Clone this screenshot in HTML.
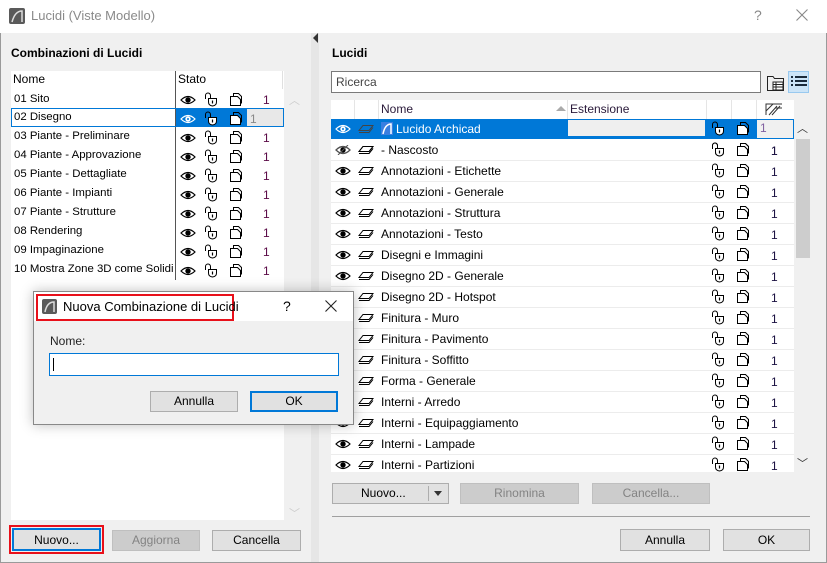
<!DOCTYPE html>
<html><head><meta charset="utf-8"><style>
*{box-sizing:border-box;margin:0;padding:0}
body{width:827px;height:563px;overflow:hidden;font-family:"Liberation Sans",sans-serif;font-size:12px;color:#000;background:#f0f0f0;position:relative}
.a{position:absolute}
.btn{position:absolute;background:#e1e1e1;border:1px solid #adadad;text-align:center;font-size:12px}
.dis{background:#cccccc;border-color:#bfbfbf;color:#838383}
.row{position:absolute;height:19px;line-height:19px;white-space:nowrap}
.lr{font-size:11.4px}
svg.i{position:absolute}
</style></head><body>
<svg width="0" height="0" style="position:absolute">
<defs>
<symbol id="eye" viewBox="0 0 16 10"><path d="M1 5 Q8 -2 15 5 Q8 12 1 5Z" fill="none" stroke="#000" stroke-width="1.2"/><circle cx="8" cy="5" r="2.7" fill="#000"/></symbol>
<symbol id="eyew" viewBox="0 0 16 10"><path d="M1 5 Q8 -2 15 5 Q8 12 1 5Z" fill="none" stroke="#fff" stroke-width="1.2"/><circle cx="8" cy="5" r="2.7" fill="#fff"/><circle cx="8" cy="5" r="1" fill="#0078d7"/></symbol>
<symbol id="eyeh" viewBox="0 0 16 10"><path d="M1 5 Q8 -2 15 5 Q8 12 1 5Z" fill="none" stroke="#555" stroke-width="1.1"/><path d="M3 10 L13 0" stroke="#555" stroke-width="1.1"/></symbol>
<symbol id="lk" viewBox="0 0 14 15"><path d="M1.5 7 V3.5 A2.5 2.5 0 0 1 6.5 3.5 V6" fill="none" stroke="#000"/><path d="M4.5 6.5 H12.5 V10 Q12.5 13.5 8.5 14 Q4.5 13.5 4.5 10Z" fill="#fff" stroke="#000"/><path d="M8.5 8.5v3" stroke="#000" stroke-width="1.2"/></symbol>
<symbol id="pg" viewBox="0 0 14 15"><path d="M4.5 4.5 V1.5 H9.5 L12.5 4.5 V11.5" fill="none" stroke="#000"/><path d="M1.5 4.5 H8.5 L11.5 7.5 V13.5 H1.5Z" fill="#fff" stroke="#000"/></symbol>
<symbol id="ly" viewBox="0 0 16 10"><path d="M5 1.5 H15 L11 6.5 H1Z" fill="none" stroke="#000"/><path d="M1 8.5 H11 L15 3.5" fill="none" stroke="#000"/></symbol>
<symbol id="lyw" viewBox="0 0 16 10"><path d="M5 1.5 H15 L11 6.5 H1Z" fill="none" stroke="#444"/><path d="M1 8.5 H11 L15 3.5" fill="none" stroke="#444"/></symbol>
</defs></svg>

<!-- title bar -->
<div class="a" style="left:0;top:0;width:827px;height:33px;background:#fff"></div>
<svg class="a" style="left:9px;top:8px" width="16" height="16"><rect width="16" height="16" rx="2" fill="#5a5a5a"/><path d="M3 14 Q6 3 13 3 V14" fill="none" stroke="#ddd" stroke-width="1.5"/></svg>
<div class="a" style="left:31px;top:8px;font-size:13px;color:#8a8a8a">Lucidi (Viste Modello)</div>
<div class="a" style="left:754px;top:7px;font-size:14px;color:#888">?</div>
<svg class="a" style="left:796px;top:9px" width="12" height="12"><path d="M0.5 0.5L11.5 11.5M11.5 0.5L0.5 11.5" stroke="#888" stroke-width="1.1"/></svg>
<div class="a" style="left:0;top:33px;width:827px;height:530px;border:1px solid #9a9a9a;border-top:none"></div>

<!-- divider -->
<div class="a" style="left:311px;top:33px;width:8px;height:529px;background:#e6e6e6"></div>
<div class="a" style="left:313px;top:33px;width:0;height:0;border-top:5px solid transparent;border-bottom:5px solid transparent;border-right:5px solid #333"></div>

<!-- left panel -->
<div class="a" style="left:11px;top:46px;font-weight:bold">Combinazioni di Lucidi</div>
<div class="a" style="left:11px;top:71px;width:273px;height:449px;background:#fff"></div>
<div class="a" style="left:175px;top:71px;width:1px;height:209px;background:#555"></div>
<div class="a" style="left:282px;top:71px;width:1px;height:18px;background:#e0e0e0"></div>
<div class="row" style="left:13px;top:70px">Nome</div>
<div class="row" style="left:178px;top:70px">Stato</div>
<div class="a" style="left:289px;top:92px;color:#ccc;font-size:11px">︿</div>
<div class="a" style="left:289px;top:505px;color:#ccc;font-size:11px">﹀</div>

<div class="a" style="left:11px;top:108px;width:273px;height:19px;border:1px solid #0078d7"></div>
<div class="a" style="left:176px;top:109px;width:71px;height:17px;background:#0078d7"></div>
<div class="a" style="left:247px;top:109px;width:36px;height:17px;background:#e8e8e8"></div>

<div class="row lr" style="left:14px;top:90px">01 Sito</div>
<div class="row lr" style="left:14px;top:108px">02 Disegno</div>
<div class="row lr" style="left:14px;top:127px">03 Piante - Preliminare</div>
<div class="row lr" style="left:14px;top:146px">04 Piante - Approvazione</div>
<div class="row lr" style="left:14px;top:165px">05 Piante - Dettagliate</div>
<div class="row lr" style="left:14px;top:184px">06 Piante - Impianti</div>
<div class="row lr" style="left:14px;top:203px">07 Piante - Strutture</div>
<div class="row lr" style="left:14px;top:222px">08 Rendering</div>
<div class="row lr" style="left:14px;top:241px">09 Impaginazione</div>
<div class="row lr" style="left:14px;top:260px;width:160px;overflow:hidden">10 Mostra Zone 3D come Solidi</div>

<!-- left icons -->
<svg class="a" style="left:180px;top:90px" width="100" height="190">
<g id="lrow"><use href="#eye" x="0" y="5" width="16" height="10"/><use href="#lk" x="24" y="2" width="14" height="15"/><use href="#pg" x="49" y="2" width="14" height="15"/></g>
<use href="#lrow" y="38"/><use href="#lrow" y="57"/><use href="#lrow" y="76"/><use href="#lrow" y="95"/><use href="#lrow" y="114"/><use href="#lrow" y="133"/><use href="#lrow" y="152"/><use href="#lrow" y="171"/>
<g transform="translate(0,19)"><use href="#eyew" x="0" y="5" width="16" height="10"/><use href="#lk" x="24" y="2" width="14" height="15"/><use href="#pg" x="49" y="2" width="14" height="15"/></g>
<g fill="#5a0a46" font-family="Liberation Sans" font-size="12"><text x="83" y="14">1</text><text x="83" y="52">1</text><text x="83" y="71">1</text><text x="83" y="90">1</text><text x="83" y="109">1</text><text x="83" y="128">1</text><text x="83" y="147">1</text><text x="83" y="166">1</text><text x="83" y="185">1</text></g>
<text x="70" y="33" fill="#888" font-family="Liberation Sans" font-size="12">1</text>
</svg>

<div class="a" style="left:9px;top:525px;width:95px;height:29px;border:2px solid #e8101a"></div>
<div class="btn" style="left:12px;top:528px;width:89px;height:23px;line-height:20px;border:2px solid #0078d7">Nuovo...</div>
<div class="btn dis" style="left:112px;top:530px;width:88px;height:21px;line-height:19px">Aggiorna</div>
<div class="btn" style="left:212px;top:530px;width:89px;height:21px;line-height:19px">Cancella</div>

<!-- right panel -->
<div class="a" style="left:332px;top:46px;font-weight:bold">Lucidi</div>
<div class="a" style="left:331px;top:71px;width:430px;height:22px;background:#fff;border:1px solid #7a7a7a;padding-left:4px;line-height:20px;color:#444">Ricerca</div>
<svg class="a" style="left:766px;top:74px" width="20" height="18"><path d="M1.5 2.5 H7 L8.5 4.5 H17.5 V16.5 H1.5Z" fill="none" stroke="#222"/><rect x="7" y="8" width="10" height="8" fill="#fff" stroke="#222"/><path d="M7 10.5H17M7 13H17M10 8V16" stroke="#222"/></svg>
<div class="a" style="left:788px;top:71px;width:21px;height:22px;background:#cce4f7;border:1px solid #99c9ef"></div>
<svg class="a" style="left:791px;top:75px" width="16" height="14"><path d="M0 2H2M4 2H16M0 6H2M4 6H16M0 10H2M4 10H16" stroke="#1a2a3a" stroke-width="2"/></svg>

<div class="a" style="left:331px;top:100px;width:463px;height:372px;background:#fff"></div>
<div class="a" style="left:354px;top:100px;width:1px;height:19px;background:#e5e5e5"></div>
<div class="a" style="left:378px;top:100px;width:1px;height:19px;background:#e5e5e5"></div>
<div class="a" style="left:567px;top:100px;width:1px;height:19px;background:#e5e5e5"></div>
<div class="a" style="left:706px;top:100px;width:1px;height:19px;background:#e5e5e5"></div>
<div class="a" style="left:731px;top:100px;width:1px;height:19px;background:#e5e5e5"></div>
<div class="a" style="left:756px;top:100px;width:1px;height:19px;background:#e5e5e5"></div>
<div class="row" style="left:381px;top:100px;color:#2a1a3a">Nome</div>
<div class="a" style="left:556px;top:106px;border-left:5px solid transparent;border-right:5px solid transparent;border-bottom:5px solid #aaa"></div>
<div class="row" style="left:570px;top:100px;color:#2a1a3a">Estensione</div>
<svg class="a" style="left:765px;top:103px" width="18" height="13"><path d="M1 12V1H17M4 12L12 3M7 12L15 3M1 8L8 1M10 5H17" stroke="#333" fill="none"/></svg>

<div class="a" style="left:331px;top:119px;width:463px;height:20px;background:#0078d7"></div>
<div class="a" style="left:568px;top:120px;width:137px;height:16px;background:#efefef"></div>
<div class="a" style="left:757px;top:120px;width:36px;height:18px;background:#f0f0f0"></div>
<div class="a" style="left:760px;top:121px;color:#8060a0">1</div>
<svg class="a" style="left:381px;top:122px" width="12" height="13"><rect width="12" height="13" fill="#3a7fe0"/><path d="M2 12 Q4 2 10 2 V12" fill="none" stroke="#fff" stroke-width="1.5"/></svg>

<div class="a" style="left:794px;top:119px;width:16px;height:353px;background:#f0f0f0"></div>
<div class="a" style="left:796px;top:139px;width:14px;height:119px;background:#cdcdcd"></div>
<div class="a" style="left:797px;top:120px;font-size:11px;color:#333">︿</div>
<div class="a" style="left:797px;top:455px;font-size:11px;color:#333">﹀</div>

<div class="row" style="left:396px;top:120px;color:#fff">Lucido Archicad</div>
<div class="row" style="left:381px;top:141px">- Nascosto</div>
<div class="row" style="left:381px;top:162px">Annotazioni - Etichette</div>
<div class="row" style="left:381px;top:183px">Annotazioni - Generale</div>
<div class="row" style="left:381px;top:204px">Annotazioni - Struttura</div>
<div class="row" style="left:381px;top:225px">Annotazioni - Testo</div>
<div class="row" style="left:381px;top:246px">Disegni e Immagini</div>
<div class="row" style="left:381px;top:267px">Disegno 2D - Generale</div>
<div class="row" style="left:381px;top:288px">Disegno 2D - Hotspot</div>
<div class="row" style="left:381px;top:309px">Finitura - Muro</div>
<div class="row" style="left:381px;top:330px">Finitura - Pavimento</div>
<div class="row" style="left:381px;top:351px">Finitura - Soffitto</div>
<div class="row" style="left:381px;top:372px">Forma - Generale</div>
<div class="row" style="left:381px;top:393px">Interni - Arredo</div>
<div class="row" style="left:381px;top:414px">Interni - Equipaggiamento</div>
<div class="row" style="left:381px;top:435px">Interni - Lampade</div>
<div class="row" style="left:381px;top:456px">Interni - Partizioni</div>
<svg class="a" style="left:331px;top:119px" width="463" height="353">
<g stroke="#ececec"><path d="M0 41.5H463M0 62.5H463M0 83.5H463M0 104.5H463M0 125.5H463M0 146.5H463M0 167.5H463M0 188.5H463M0 209.5H463M0 230.5H463M0 251.5H463M0 272.5H463M0 293.5H463M0 314.5H463M0 335.5H463"/></g>
<g id="rr"><use href="#eye" x="4" y="26" width="16" height="10"/><use href="#ly" x="27" y="26" width="16" height="10"/><use href="#lk" x="380" y="23" width="14" height="15"/><use href="#pg" x="405" y="23" width="14" height="15"/><text x="440" y="36" font-family="Liberation Sans" font-size="12" fill="#1a1040">1</text></g>
<use href="#rr" y="21"/><use href="#rr" y="42"/><use href="#rr" y="63"/><use href="#rr" y="84"/><use href="#rr" y="105"/><use href="#rr" y="126"/><use href="#rr" y="147"/><use href="#rr" y="168"/><use href="#rr" y="189"/><use href="#rr" y="210"/><use href="#rr" y="231"/><use href="#rr" y="252"/><use href="#rr" y="273"/><use href="#rr" y="294"/><use href="#rr" y="315"/>
<g transform="translate(0,-21)"><use href="#eyew" x="4" y="26" width="16" height="10"/><use href="#lyw" x="27" y="26" width="16" height="10"/><use href="#lk" x="380" y="23" width="14" height="15"/><use href="#pg" x="405" y="23" width="14" height="15"/></g>
<g><use href="#eyeh" x="4" y="26" width="16" height="10"/><use href="#ly" x="27" y="26" width="16" height="10"/><use href="#lk" x="380" y="23" width="14" height="15"/><use href="#pg" x="405" y="23" width="14" height="15"/><text x="440" y="36" font-family="Liberation Sans" font-size="12" fill="#1a1040">1</text></g>
</svg>

<div class="btn" style="left:332px;top:483px;width:117px;height:21px;line-height:19px;text-align:left;padding-left:28px">Nuovo...</div>
<div class="a" style="left:428px;top:486px;width:1px;height:15px;background:#adadad"></div>
<div class="a" style="left:434px;top:491px;border-left:4px solid transparent;border-right:4px solid transparent;border-top:5px solid #333"></div>
<div class="btn dis" style="left:460px;top:483px;width:119px;height:21px;line-height:19px">Rinomina</div>
<div class="btn dis" style="left:592px;top:483px;width:118px;height:21px;line-height:19px">Cancella...</div>
<div class="a" style="left:332px;top:516px;width:478px;height:1px;background:#a0a0a0"></div>
<div class="btn" style="left:620px;top:529px;width:90px;height:22px;line-height:20px">Annulla</div>
<div class="btn" style="left:723px;top:529px;width:87px;height:22px;line-height:20px">OK</div>

<!-- modal dialog -->
<div class="a" style="left:33px;top:291px;width:321px;height:134px;background:#f0f0f0;border:1px solid #888;box-shadow:0 0 12px rgba(0,0,0,0.25)"></div>
<div class="a" style="left:34px;top:292px;width:319px;height:29px;background:#fff"></div>
<div class="a" style="left:36px;top:294px;width:198px;height:27px;border:2px solid #e8101a"></div>
<svg class="a" style="left:42px;top:299px" width="15" height="15"><rect width="15" height="15" rx="2" fill="#5a5a5a"/><path d="M3 13 Q5 3 12 3 V13" fill="none" stroke="#ddd" stroke-width="1.5"/></svg>
<div class="a" style="left:63px;top:299px;font-size:13px">Nuova Combinazione di Lucidi</div>
<div class="a" style="left:283px;top:298px;font-size:14px">?</div>
<svg class="a" style="left:325px;top:300px" width="12" height="12"><path d="M0.5 0.5L11.5 11.5M11.5 0.5L0.5 11.5" stroke="#222" stroke-width="1.1"/></svg>
<div class="a" style="left:50px;top:334px;color:#222">Nome:</div>
<div class="a" style="left:49px;top:353px;width:290px;height:23px;background:#fff;border:1px solid #0078d7"></div>
<div class="a" style="left:53px;top:358px;width:1px;height:13px;background:#000"></div>
<div class="btn" style="left:150px;top:391px;width:88px;height:21px;line-height:19px">Annulla</div>
<div class="btn" style="left:250px;top:391px;width:88px;height:21px;line-height:17px;border:2px solid #0078d7">OK</div>
</body></html>
